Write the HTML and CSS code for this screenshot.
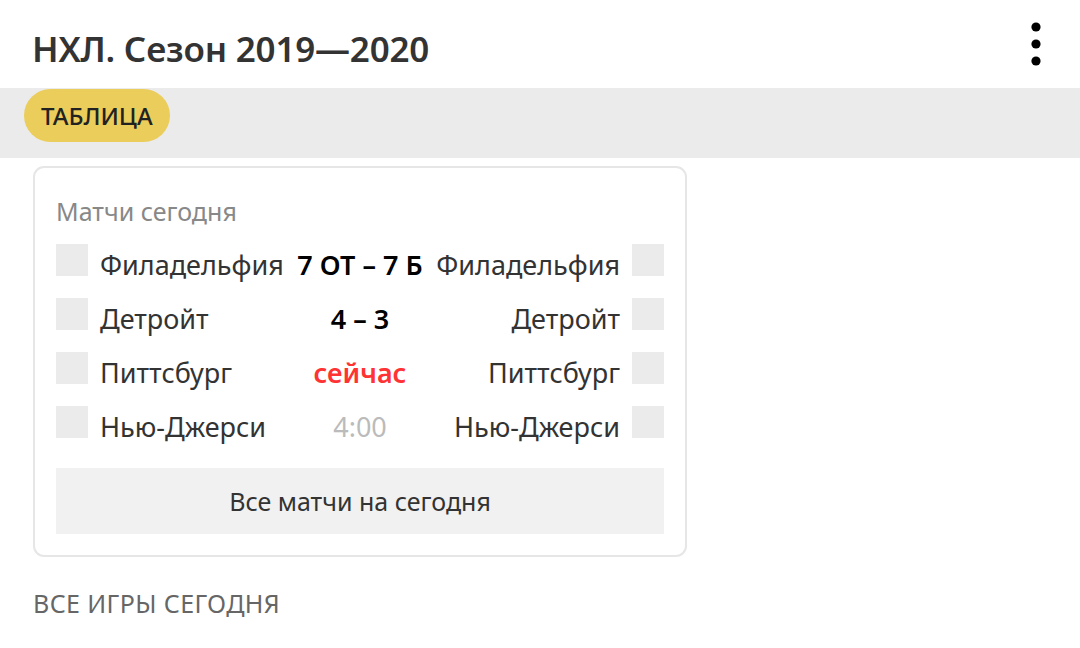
FILE: index.html
```html
<!DOCTYPE html>
<html lang="ru">
<head>
<meta charset="utf-8">
<title>НХЛ. Сезон 2019—2020</title>
<link rel="stylesheet" href="styles.css">
</head>
<body>
<header class="top">
  <h1 class="title">НХЛ. Сезон 2019—2020</h1>
  <button class="menu" aria-label="Меню">
    <svg width="12" height="46" viewBox="0 0 12 46"><circle cx="6" cy="6" r="4.6" fill="#000"/><circle cx="6" cy="23" r="4.6" fill="#000"/><circle cx="6" cy="40" r="4.6" fill="#000"/></svg>
  </button>
</header>
<nav class="tabs">
  <span class="tab active">ТАБЛИЦА</span>
</nav>
<main class="content">
  <section class="card">
    <div class="card-title">Матчи сегодня</div>
    <div class="matches">
      <div class="match">
        <span class="logo"></span>
        <span class="team left">Филадельфия</span>
        <span class="score">7 ОТ – 7 Б</span>
        <span class="team right">Филадельфия</span>
        <span class="logo"></span>
      </div>
      <div class="match">
        <span class="logo"></span>
        <span class="team left">Детройт</span>
        <span class="score">4 – 3</span>
        <span class="team right">Детройт</span>
        <span class="logo"></span>
      </div>
      <div class="match">
        <span class="logo"></span>
        <span class="team left">Питтсбург</span>
        <span class="score live">сейчас</span>
        <span class="team right">Питтсбург</span>
        <span class="logo"></span>
      </div>
      <div class="match">
        <span class="logo"></span>
        <span class="team left">Нью-Джерси</span>
        <span class="score time">4:00</span>
        <span class="team right">Нью-Джерси</span>
        <span class="logo"></span>
      </div>
    </div>
    <button class="all-btn">Все матчи на сегодня</button>
  </section>
  <h2 class="section-title">ВСЕ ИГРЫ СЕГОДНЯ</h2>
</main>
</body>
</html>
```
FILE: styles.css
```css
* { box-sizing: border-box; }
html, body { margin: 0; padding: 0; background: #fff; }
body {
  font-family: "Noto Sans", "Open Sans", sans-serif;
  color: #333;
  width: 1080px;
  height: 648px;
  overflow: hidden;
}
.top {
  height: 88px;
  display: flex;
  align-items: center;
  justify-content: space-between;
  padding: 0 38px 0 32px;
}
.title {
  margin: 0;
  padding-top: 8px;
  font-size: 35px;
  font-weight: 600;
  color: #333;
  letter-spacing: -0.2px;
}
.menu {
  border: 0;
  background: none;
  padding: 0;
  display: flex;
}
.tabs {
  background: #ebebeb;
  height: 70px;
  padding: 1px 24px 0;
  display: flex;
  align-items: flex-start;
}
.tab {
  height: 53px;
  display: flex;
  align-items: center;
  padding: 0 17px;
  border-radius: 27px;
  font-size: 24px;
  font-weight: 500;
  color: #222;
}
.tab.active { background: #ebcd5b; }
.content { padding: 8px 33px 0; }
.card {
  width: 654px;
  border: 2px solid #e6e6e6;
  border-radius: 11px;
  padding: 28px 21px 21px;
}
.card-title {
  font-size: 25px;
  color: #888;
  line-height: 30px;
}
.matches {
  margin-top: 18px;
  display: flex;
  flex-direction: column;
  gap: 22px;
}
.match {
  display: grid;
  grid-template-columns: 32px minmax(0, 1fr) auto minmax(0, 1fr) 32px;
  column-gap: 12px;
  align-items: center;
  height: 32px;
}
.logo {
  width: 32px;
  height: 32px;
  background: #ebebeb;
}
.team {
  font-size: 27px;
  color: #333;
  white-space: nowrap;
  line-height: 32px;
  position: relative;
  top: 5px;
}
.team.right { text-align: right; }
.score {
  font-size: 27px;
  font-weight: 600;
  color: #000;
  white-space: nowrap;
  line-height: 32px;
  position: relative;
  top: 5px;
}
.score.live { color: #f33; }
.score.time { color: #bbb; font-weight: 400; }
.all-btn {
  margin-top: 30px;
  width: 100%;
  height: 66px;
  border: 0;
  background: #f1f1f1;
  font-family: inherit;
  font-size: 25px;
  color: #333;
  display: block;
}
.section-title {
  margin: 29px 0 0;
  font-size: 25px;
  font-weight: 400;
  color: #666;
  letter-spacing: 0.4px;
}
```
